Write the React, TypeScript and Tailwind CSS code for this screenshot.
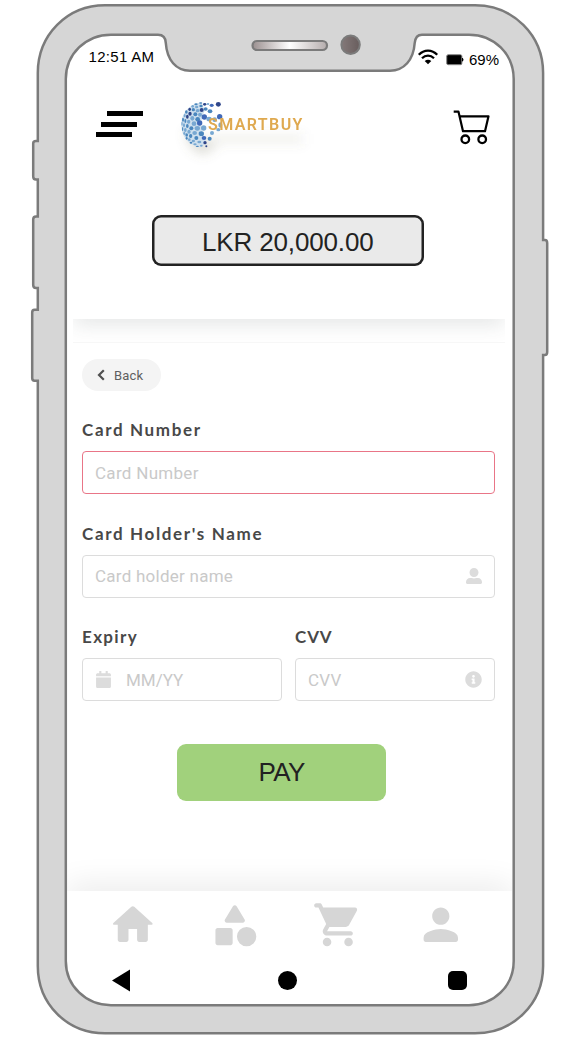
import React from "react";
import { FaCalendar, FaInfoCircle, FaUserAlt } from "react-icons/fa";

const NAV_ICONS: { name: string; path: string }[] = [
  {
    name: "Home",
    path: "M10 19v-5h4v5c0 .55.45 1 1 1h3c.55 0 1-.45 1-1v-7h1.7c.46 0 .68-.57.33-.87L12.67 3.6c-.38-.34-.96-.34-1.34 0l-8.36 7.53c-.34.3-.13.87.33.87H5v7c0 .55.45 1 1 1h3c.55 0 1-.45 1-1z",
  },
  {
    name: "Categories",
    path: "M11.15 3.4L7.43 9.48c-.41.66.07 1.52.85 1.52h7.43c.78 0 1.26-.86.85-1.52L12.85 3.4c-.39-.64-1.31-.64-1.7 0zM17.5 13a4.5 4.5 0 1 0 0 9 4.5 4.5 0 1 0 0-9zM4 21.5h6c.55 0 1-.45 1-1v-6c0-.55-.45-1-1-1H4c-.55 0-1 .45-1 1v6c0 .55.45 1 1 1z",
  },
  {
    name: "Cart",
    path: "M7 18c-1.1 0-1.99.9-1.99 2S5.9 22 7 22s2-.9 2-2-.9-2-2-2zM1 3c0 .55.45 1 1 1h1l3.6 7.59-1.35 2.44C4.52 15.37 5.48 17 7 17h11c.55 0 1-.45 1-1s-.45-1-1-1H7l1.1-2h7.45c.75 0 1.41-.41 1.75-1.03l3.58-6.49c.37-.66-.11-1.48-.87-1.48H5.21l-.67-1.43c-.16-.35-.52-.57-.9-.57H2c-.55 0-1 .45-1 1zm16 15c-1.1 0-1.99.9-1.99 2s.89 2 1.99 2 2-.9 2-2-.9-2-2-2z",
  },
  {
    name: "Profile",
    path: "M12 12c2.21 0 4-1.79 4-4s-1.79-4-4-4-4 1.79-4 4 1.79 4 4 4zm0 2c-2.67 0-8 1.34-8 4v1c0 .55.45 1 1 1h14c.55 0 1-.45 1-1v-1c0-2.66-5.33-4-8-4z",
  },
];

// Globe dots: x, y, rx, ry, colour
const C = { light: "#78a8d2", mid: "#4b87be", blue: "#4069b8", dark: "#2f468a" };
const DOTS: [number, number, number, number, string][] = [
  [92, 39, 5, 2, C.mid], [104, 43, 5, 4, C.dark], [125, 46, 6, 5, C.blue], [145, 43, 7.5, 7, C.dark], [114, 42, 4, 3, C.light],
  [78, 43, 5, 3, C.mid], [68, 49, 4, 4, C.light], [80, 51, 5, 4, C.light], [93, 48, 5, 4, C.mid], [107, 57, 6, 5, C.mid], [95, 60, 6, 6, C.dark],
  [59, 58, 4, 5, C.dark], [70, 59, 5, 5, C.mid], [83, 62, 6, 5, C.light], [120, 64, 7, 6, C.mid],
  [49, 66, 4, 5, C.mid], [60, 71, 5, 6, C.dark], [76, 73, 6, 6, C.mid], [90, 74, 6, 6, C.light], [103, 81, 8, 8, C.blue],
  [44, 77, 3, 5, C.light], [52, 80, 4, 6, C.dark], [67, 85, 6, 7, C.light], [83, 88, 7, 7, C.mid], [117, 87, 8, 7, C.light], [149, 80, 8, 8, C.blue],
  [39, 89, 3, 6, C.mid], [46, 93, 3, 6, C.mid], [56, 95, 5, 6, C.light], [72, 101, 7, 7, C.light], [89, 99, 8, 8, C.blue], [134, 89, 7, 7, C.light],
  [36, 101, 2, 6, C.light], [42, 106, 3, 6, C.light], [52, 108, 4, 6, C.mid], [64, 115, 6, 6, C.mid], [82, 115, 8, 7, C.light], [101, 114, 8, 8, C.light],
  [38, 117, 2, 6, C.mid], [46, 120, 4, 6, C.light], [57, 125, 5, 6, C.light], [74, 129, 7, 6, C.light], [94, 131, 8, 7, C.mid],
  [43, 130, 3, 5, C.light], [50, 135, 4, 5, C.mid], [62, 138, 5, 6, C.mid], [79, 144, 6, 6, C.mid], [102, 144, 7, 6, C.blue], [119, 146, 6, 6, C.mid], [126, 129, 6, 6, C.light],
  [50, 145, 3, 4, C.mid], [58, 149, 4, 4, C.light], [70, 153, 5, 4, C.light], [88, 156, 6, 4, C.light], [105, 158, 5, 5, C.dark],
  [63, 158, 4, 3, C.mid], [75, 163, 5, 3, C.light], [82, 169, 5, 2, C.mid], [94, 167, 4, 3, C.light], [109, 169, 3, 3, C.dark], [151, 105, 6, 8, C.light], [145, 119, 6, 5, C.light],
];

function DeviceFrame() {
  return (
    <svg aria-hidden="true" className="absolute inset-0" width="562" height="1044" viewBox="0 0 562 1044" fill="none">
      <defs>
        <linearGradient id="speaker" x1="0" x2="1" y1="0" y2="0">
          <stop offset="0" stopColor="#9b9090" />
          <stop offset=".5" stopColor="#fff" />
          <stop offset="1" stopColor="#b5adad" />
        </linearGradient>
        <linearGradient id="camera" x1="0" x2="1" y1="0" y2="0">
          <stop offset="0" stopColor="#847979" />
          <stop offset="1" stopColor="#685d5d" />
        </linearGradient>
      </defs>
      <path
        fill="#d6d6d6"
        stroke="#7b7b7b"
        strokeWidth="2.5"
        d="M105 5.3H475C513 5.3 543.1 35 543.1 73V240H545Q547.2 240 547.2 243V352Q547.2 355 545 355H543.1V966C543.1 1004 513 1033.3 475 1033.3H105C67 1033.3 37.8 1004 37.8 966V380.7H34.5Q32.2 380.7 32.2 378V312.5Q32.2 309.7 34.5 309.7H37.8V288H36Q33.2 288 33.2 285V219.5Q33.2 216.5 36 216.5H37.8V179.5H36Q33.2 179.5 33.2 176.5V143.5Q33.2 141 36 141H37.8V73C37.8 35 67 5.3 105 5.3Z"
      />
      <path
        fill="#fff"
        stroke="#7b7b7b"
        strokeWidth="2.5"
        d="M111 34.7H158Q165.5 34.7 165.8 43C167 60 176 70.7 190 70.7H390C404 70.7 413.5 60 414.7 43Q415.5 34.7 422 34.7H469C494 34.7 513.7 54 513.7 79V961C513.7 986 494 1005.2 469 1005.2H111C86 1005.2 65.8 986 65.8 961V79C65.8 54 86 34.7 111 34.7Z"
      />
      <rect x="252.5" y="41" width="74.5" height="9" rx="4.5" fill="url(#speaker)" stroke="#7b7b7b" strokeWidth="2.2" />
      <circle cx="350.6" cy="44.8" r="9.2" fill="url(#camera)" stroke="#7b7b7b" strokeWidth="2" />
    </svg>
  );
}

function StatusBar() {
  return (
    <div className="flex h-9 justify-between pr-[14px] pl-[21.5px] font-['Liberation_Sans',sans-serif] text-[15px] leading-[18px] text-black">
      <span className="pt-3 tracking-[0.3px]">12:51 AM</span>
      <div className="flex pt-[15px]">
        <svg className="-mt-[3px] mr-[7px]" width="22" height="18" viewBox="0 0 22 18" fill="none" stroke="#000" strokeWidth="2.3">
          <path d="M1.8 6.8C7 1.2 15 1.2 20.2 6.8" />
          <path d="M5 10.2C8.5 6.8 13.5 6.8 17 10.2" />
          <path d="M7.7 13.1C9.7 11.2 12.3 11.2 14.3 13.1L11 16.3Z" fill="#000" stroke="none" />
        </svg>
        <svg className="mt-[3px] mr-[5px]" width="18" height="12" viewBox="0 0 18 12">
          <rect x=".7" y=".7" width="15.2" height="10" rx="1.5" fill="#000" stroke="#888" />
          <path d="M16.5 4.2q1 1.5 0 3z" fill="#000" stroke="#000" />
        </svg>
        <span>69%</span>
      </div>
    </div>
  );
}

function Logo() {
  return (
    <div className="relative ml-[27px] h-20 w-[145px]">
      <svg width="145" height="80" viewBox="0 0 435 240" className="absolute inset-0">
        <defs>
          <filter id="soft" x="-30%" y="-60%" width="160%" height="220%">
            <feGaussianBlur stdDeviation="16" />
          </filter>
        </defs>
        <g filter="url(#soft)" fill="#77765a">
          <path d="M45 125Q55 190 105 194L145 165L55 120Z" opacity=".22" />
          <rect x="125" y="132" width="275" height="30" opacity=".09" />
        </g>
        <path d="M95 37C55 42 34 72 34 104C34 140 55 165 90 172Q112 165 106 145Q82 105 104 62Z" fill="#cfe0ee" />
        {DOTS.map(([x, y, rx, ry, color], i) => (
          <ellipse key={i} cx={x} cy={y} rx={rx} ry={ry} fill={color} />
        ))}
      </svg>
      <span className="relative block pt-[25px] pl-[38px] font-['Roboto',sans-serif] text-[16px] leading-5 font-semibold tracking-[1.4px] text-[#dfa94f]">
        SMARTBUY
      </span>
    </div>
  );
}

function Header() {
  return (
    <header className="mt-[18px] flex h-20 pl-[29px]">
      <button aria-label="Menu" className="mt-[21px] flex h-[26px] w-[47px] flex-col justify-between">
        <span className="ml-[11px] h-[5px] w-9 bg-black" />
        <span className="ml-[5.4px] h-[5px] w-9 bg-black" />
        <span className="h-[5px] w-9 bg-black" />
      </button>
      <Logo />
      <svg className="mt-5 ml-[138px]" width="38" height="36" viewBox="0 0 38 36" fill="none" stroke="#000" strokeWidth="2.2" strokeLinejoin="round">
        <path d="M.7 1.7H5.5L10 21.2H32L35.5 6.3H6.8" />
        <circle cx="12.3" cy="29.3" r="3.8" strokeWidth="2.3" />
        <circle cx="29.2" cy="29.3" r="3.8" strokeWidth="2.3" />
      </svg>
    </header>
  );
}

function Field({
  label,
  labelClassName = "tracking-[1.65px]",
  boxClassName = "border-[#dcdcdc]",
  children,
}: {
  label: string;
  labelClassName?: string;
  boxClassName?: string;
  children: React.ReactNode;
}) {
  return (
    <div className="flex flex-1 flex-col">
      <span className={`-mt-px h-[31px] font-['Lato',sans-serif] text-[17px] leading-5 font-bold whitespace-nowrap text-[#484848] ${labelClassName}`}>
        {label}
      </span>
      <div
        className={`flex h-[43px] items-center rounded-[4px] border px-3 font-['Roboto',sans-serif] text-[17px] text-[#c9c9c9] ${boxClassName}`}
      >
        {children}
      </div>
    </div>
  );
}

function PaymentForm() {
  return (
    <div className="mt-4 flex flex-col items-start pr-[18px] pl-[15px]">
      <button className="flex h-8 w-[79px] items-center rounded-full bg-[#f4f4f4] pl-[15px] font-['Roboto',sans-serif] text-[13px] tracking-[0.2px] text-[#5f5f5f]">
        <svg className="-mt-px mr-[9px]" width="8" height="12" viewBox="0 0 8 12" fill="none" stroke="#505050" strokeWidth="2.2">
          <path d="M6.8 1.2L2 6L6.8 10.8" />
        </svg>
        <span className="pt-px">Back</span>
      </button>
      <div className="mt-[30px] flex w-full flex-col gap-[30.5px]">
        <Field label="Card Number" boxClassName="border-[#e97587]">
          <span className="pt-[2px] tracking-[0.3px]">Card Number</span>
        </Field>
        <Field label="Card Holder's Name">
          <span className="flex-1 pt-[2px] tracking-[0.25px]">Card holder name</span>
          <FaUserAlt size={16} color="#dcdcdc" />
        </Field>
        <div className="flex gap-[13px]">
          <Field label="Expiry" labelClassName="tracking-[1.35px]">
            <FaCalendar size={17} color="#dcdcdc" className="mr-[14px]" />
            <span className="pt-[2px]">MM/YY</span>
          </Field>
          <Field label="CVV" labelClassName="tracking-[0.9px]">
            <span className="flex-1 pt-[2px] tracking-[0.3px]">CVV</span>
            <FaInfoCircle size={17} color="#dcdcdc" />
          </Field>
        </div>
      </div>
    </div>
  );
}

function BottomBar() {
  return (
    <div className="mt-[58px]">
      <div className="h-8 w-[445px] overflow-hidden">
        <div className="mx-1 mt-8 h-4 shadow-[0_0_32px_4px_rgba(0,0,0,0.1)]" />
      </div>
      <nav className="flex justify-center gap-[51.2px] pt-2 pr-[7px]">
        {NAV_ICONS.map((icon) => (
          <svg key={icon.name} aria-label={icon.name} width="51.6" height="51.6" viewBox="0 0 24 24" fill="#d6d6d6">
            <path d={icon.path} />
          </svg>
        ))}
      </nav>
      <div className="mt-[18px] flex items-center justify-between pr-[46px] pl-[45px]">
        <svg width="19" height="23" viewBox="0 0 19 23">
          <path d="M0 11.5L18 .5V22.5Z" />
        </svg>
        <span className="mr-[4px] size-[19px] rounded-full bg-black" />
        <span className="size-[19px] rounded-[5px] bg-black" />
      </div>
    </div>
  );
}

export default function App() {
  return (
    <div className="relative h-[1044px] w-[562px] overflow-hidden bg-white">
      <DeviceFrame />
      <main className="relative pt-9 pl-[67px]">
        <div className="flex h-[968px] w-[446px] flex-col">
          <StatusBar />
          <Header />
          <div className="mt-[45px] ml-[84.5px] flex h-[51px] w-[272.5px] shrink-0 items-center justify-center rounded-[9px] bg-[#eaeaea] font-['Liberation_Sans',sans-serif] text-[26px] text-[#222] shadow-[inset_0_0_0_2.5px_#222]">
            <span className="pt-[4px] tracking-[-0.15px]">LKR 20,000.00</span>
          </div>
          <div className="mt-[53px] mr-2 ml-[6px] h-6 shrink-0 overflow-hidden border-b border-[#f7f7f7]">
            <div className="mx-[3px] -mt-3 h-3 shadow-[0_2px_20px_2px_rgba(60,70,70,0.17)]" />
          </div>
          <PaymentForm />
          <button className="mt-[43px] ml-[110px] h-[57px] w-[209px] shrink-0 rounded-[9px] bg-[#a1d17c] font-['Liberation_Sans',sans-serif] text-[26px] tracking-[-0.7px] text-[#222]">
            PAY
          </button>
          <BottomBar />
        </div>
      </main>
    </div>
  );
}
